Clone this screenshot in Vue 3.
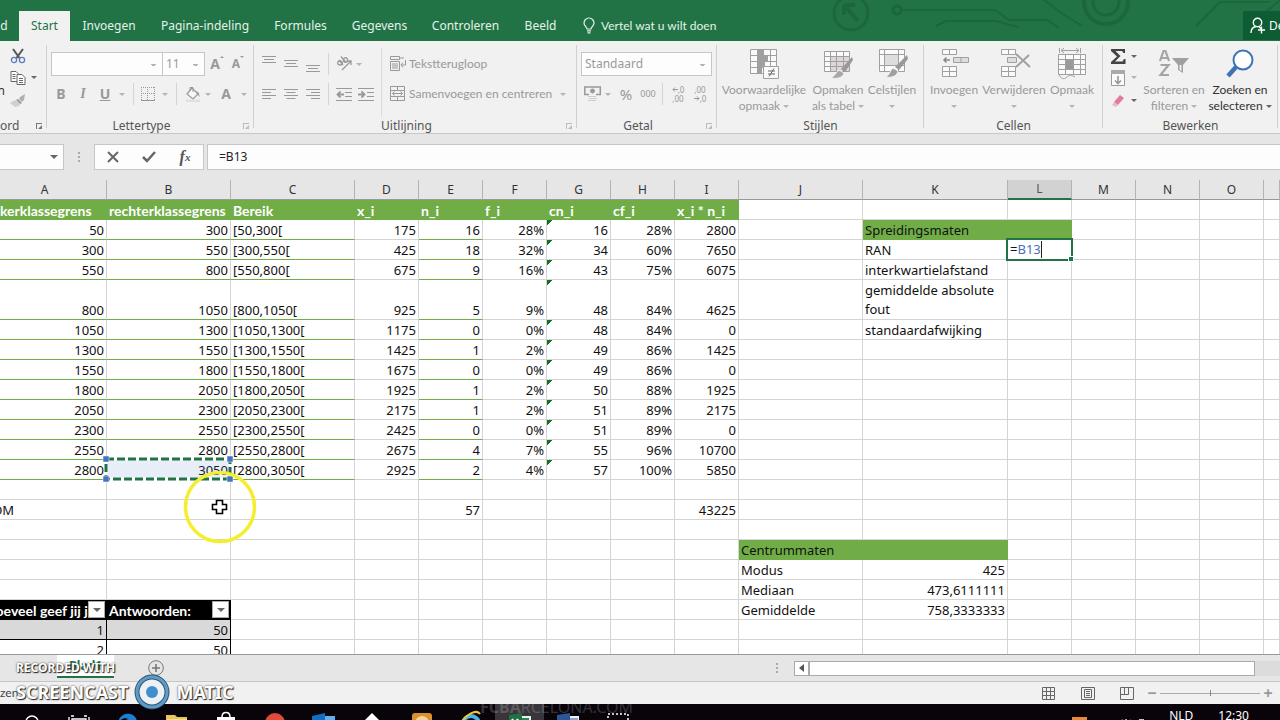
<script setup>
const columns = [
  { id: 'A', w: 124 }, { id: 'B', w: 124 }, { id: 'C', w: 124 }, { id: 'D', w: 64 },
  { id: 'E', w: 64 }, { id: 'F', w: 64 }, { id: 'G', w: 64 }, { id: 'H', w: 64 },
  { id: 'I', w: 64 }, { id: 'J', w: 124 }, { id: 'K', w: 145 }, { id: 'L', w: 64 },
  { id: 'M', w: 64 }, { id: 'N', w: 64 }, { id: 'O', w: 64 }, { id: '', w: null },
]

const heads = ['linkerklassegrens', 'rechterklassegrens', 'Bereik', 'x_i', 'n_i', 'f_i', 'cn_i', 'cf_i', 'x_i * n_i']

const classes = [
  ['50', '300', '[50,300[', '175', '16', '28%', '16', '28%', '2800'],
  ['300', '550', '[300,550[', '425', '18', '32%', '34', '60%', '7650'],
  ['550', '800', '[550,800[', '675', '9', '16%', '43', '75%', '6075'],
  ['800', '1050', '[800,1050[', '925', '5', '9%', '48', '84%', '4625'],
  ['1050', '1300', '[1050,1300[', '1175', '0', '0%', '48', '84%', '0'],
  ['1300', '1550', '[1300,1550[', '1425', '1', '2%', '49', '86%', '1425'],
  ['1550', '1800', '[1550,1800[', '1675', '0', '0%', '49', '86%', '0'],
  ['1800', '2050', '[1800,2050[', '1925', '1', '2%', '50', '88%', '1925'],
  ['2050', '2300', '[2050,2300[', '2175', '1', '2%', '51', '89%', '2175'],
  ['2300', '2550', '[2300,2550[', '2425', '0', '0%', '51', '89%', '0'],
  ['2550', '2800', '[2550,2800[', '2675', '4', '7%', '55', '96%', '10700'],
  ['2800', '3050', '[2800,3050[', '2925', '2', '4%', '57', '100%', '5850'],
]

const cells = {}
const put = (ref, text, cls = '') => { cells[ref] = { text, cls } }

heads.forEach((t, i) => put('ABCDEFGHI'[i] + 1, t, 'head'))
classes.forEach((row, r) => row.forEach((t, c) => {
  const col = 'ABCDEFGHI'[c]
  const cls = [col === 'C' ? '' : 'num']
  if ('ABCE'.includes(col)) cls.push('ruled')
  if (col === 'G') cls.push('flag')
  put(col + (r + 2), t, cls.join(' '))
}))
put('K2', 'Spreidingsmaten', 'green')
put('L2', '', 'green')
put('K3', 'RAN')
put('K4', 'interkwartielafstand')
put('K5', 'gemiddelde absolute fout', 'wrap')
put('K6', 'standaardafwijking')
put('A15', 'SOM')
put('E15', '57', 'num')
put('I15', '43225', 'num')
put('J17', 'Centrummaten', 'green')
put('K17', '', 'green')
put('J18', 'Modus')
put('K18', '425', 'num')
put('J19', 'Mediaan')
put('K19', '473,6111111', 'num')
put('J20', 'Gemiddelde')
put('K20', '758,3333333', 'num')
put('A20', 'Hoeveel geef jij j', 'black')
put('B20', 'Antwoorden:', 'black')
put('A21', '1', 'num band')
put('B21', '50', 'num band')
put('A22', '2', 'num plain')
put('B22', '50', 'num plain')

const tabs = [
  { t: 'Invoegen', w: 78 }, { t: 'Pagina-indeling', w: 114 }, { t: 'Formules', w: 77 },
  { t: 'Gegevens', w: 81 }, { t: 'Controleren', w: 91 }, { t: 'Beeld', w: 59 },
]
</script>

<template>
  <div class="app">
    <header class="titlebar">
      <svg class="circuit" width="450" height="41" viewBox="0 0 450 41" fill="none" stroke="#1b6139" stroke-width="3">
        <circle cx="21" cy="13" r="17" /><path d="M14 5l14 16M14 5v10M14 5h11" stroke-width="4" />
        <circle cx="67" cy="10" r="4" /><path d="M71 10h94l14 10h38l12 8M106 26l10-5h50l22 6" stroke-width="2" />
        <path d="M214 0l16 12 22 14" stroke-width="2" /><circle cx="276" cy="2" r="22" stroke-width="4" /><circle cx="276" cy="2" r="13" />
        <path d="M366 26l24-24h50M436 12l14-12" stroke-width="2" />
      </svg>
      <nav class="tabs">
        <button class="tab edge">d</button>
        <button class="tab active">Start</button>
        <button v-for="t in tabs" :key="t.t" class="tab" :style="{ width: t.w + 'px' }">{{ t.t }}</button>
        <button class="tell">
          <svg width="12" height="16" viewBox="0 0 12 16" fill="none" stroke="#e4f2e9" stroke-width="1.2"><path d="M4 11c0-2-3-3-3-6a5 5 0 0 1 10 0c0 3-3 4-3 6zM4 12.8h4M4.500 14.800h3" /></svg>
          <span>Vertel wat u wilt doen</span>
        </button>
        <button class="share">
          <svg width="16" height="17" viewBox="0 0 16 17" fill="none" stroke="#fff" stroke-width="1.400"><circle cx="7.500" cy="5.500" r="4.200" /><path d="M1 16c0-4 2-6 5-6.500M9 10l2 1.500M11.500 9.500v7M8 13h7" /></svg>
          <span>De</span>
        </button>
      </nav>
    </header>

    <section class="ribbon">
      <div class="group clip">
        <div class="body">
          <span class="cut">n</span>
          <div class="stack">
            <div class="line">
              <button class="ico w18" aria-label="Knippen"><svg width="16" height="16" viewBox="0 0 16 16" fill="none"><path d="M3 1l6.500 9M13 1L6.500 10" stroke="#555" stroke-width="2" /><circle cx="4" cy="12" r="2.600" stroke="#5b7fbd" stroke-width="1.300" /><circle cx="12" cy="12" r="2.600" stroke="#5b7fbd" stroke-width="1.300" /></svg></button>
            </div>
            <div class="line">
              <button class="ico w18" aria-label="Kopiëren"><svg width="16" height="14" viewBox="0 0 16 14" fill="#fff" stroke="#666"><path d="M1 .5h5l2 2v8H1z" /><path d="M7 3.500h5l3 3v7H7zM2.500 3.500h3M2.500 5.500h3M2.500 7.500h3M9 7.500h4M9 9.500h4M9 11.500h4" /></svg></button>
              <i class="arr dark"></i>
            </div>
            <div class="line">
              <button class="ico w18" aria-label="Opmaak kopiëren"><svg width="16" height="14" viewBox="0 0 16 14"><path d="M15 0l-5 3-1 2 3 3 2-2z" fill="#b0b0b0" /><path d="M8 5l4 4-2 1-4-4z" fill="#999" /><path d="M5 6L0 9l5 4 4-1 1-2z" fill="#cfcfcf" /></svg></button>
            </div>
          </div>
        </div>
        <footer><span class="cliplabel">ord</span><button class="launch on" aria-label="Klembord"></button></footer>
      </div>

      <div class="group font">
        <div class="body col">
          <div class="row">
            <select class="fontname" aria-label="Lettertype"><option></option></select>
            <select class="fontsize" aria-label="Tekengrootte"><option>11</option></select>
            <button class="ico w24 bigA" aria-label="Groter">A<i class="up"></i></button>
            <button class="ico w18 smallA" aria-label="Kleiner">A<i class="down"></i></button>
          </div>
          <div class="row">
            <button class="ico w20 b">B</button>
            <button class="ico w24 i">I</button>
            <button class="ico w20 u">U</button>
            <span class="ico w14"><i class="arr"></i></span>
            <span class="ico w8"><i class="bar"></i></span>
            <button class="ico w22" aria-label="Randen"><svg width="14" height="14" viewBox="0 0 14 14" fill="none" stroke="#999" stroke-dasharray="1 1"><path d="M0 .5h14M0 6.500h14M.5 0v13M6.500 0v13M13.500 0v13" /><path d="M0 13.500h14" stroke-dasharray="none" /></svg></button>
            <span class="ico w12"><i class="arr"></i></span>
            <span class="ico w10"><i class="bar"></i></span>
            <button class="ico w24" aria-label="Opvulkleur"><svg width="16" height="16" viewBox="0 0 16 16"><path d="M7 2l6 6-5 5-6-5z" fill="#f8f8f8" stroke="#999" stroke-width="1.200" /><path d="M5 5V1.500h3V6" fill="none" stroke="#999" /><path d="M11 5c3 1 3.500 3 3.500 6l-2-3z" fill="#999" /><path d="M1 13.500h14V16H1z" fill="#e0e0e0" /></svg></button>
            <span class="ico w6"><i class="arr"></i></span>
            <button class="ico w30 b">A</button>
            <span class="ico w6"><i class="arr"></i></span>
          </div>
        </div>
        <footer><span>Lettertype</span><button class="launch" aria-label="Lettertype-instellingen"></button></footer>
      </div>

      <div class="group align">
        <div class="body">
          <div class="col alignleft">
            <div class="row">
              <button class="ico w22" aria-label="Boven"><svg width="14" height="16" viewBox="0 0 14 16" stroke="#999"><path d="M0 .5h14M2 3.500h10M0 6.500h14" /></svg></button>
              <button class="ico w22" aria-label="Midden"><svg width="14" height="16" viewBox="0 0 14 16" stroke="#999"><path d="M0 4.500h14M2 7.500h10M0 10.500h14" /></svg></button>
              <button class="ico w22" aria-label="Onder"><svg width="14" height="16" viewBox="0 0 14 16" stroke="#999"><path d="M0 9.500h14M2 12.500h10M0 15.500h14" /></svg></button>
              <span class="ico w8"><i class="bar"></i></span>
              <button class="ico w24" aria-label="Afdrukstand"><svg width="17" height="16" viewBox="0 0 17 16" fill="none" stroke="#999" stroke-width="1.300"><path d="M6 14L15 5M11 5h4v4" /><ellipse cx="4" cy="7" rx="2.300" ry="2" /><path d="M3 4l4 5M5 .5l5 6" /><ellipse cx="9.500" cy="4" rx="2" ry="2.300" /></svg></button>
              <span class="ico w6"><i class="arr"></i></span>
            </div>
            <div class="row">
              <button class="ico w22" aria-label="Links"><svg width="14" height="11" viewBox="0 0 14 11" stroke="#999"><path d="M0 .5h14M0 3.500h9M0 6.500h14M0 9.500h9" /></svg></button>
              <button class="ico w22" aria-label="Centreren"><svg width="14" height="11" viewBox="0 0 14 11" stroke="#999"><path d="M0 .5h14M2.500 3.500h9M0 6.500h14M2.500 9.500h9" /></svg></button>
              <button class="ico w22" aria-label="Rechts"><svg width="14" height="11" viewBox="0 0 14 11" stroke="#999"><path d="M0 .5h14M5 3.500h9M0 6.500h14M5 9.500h9" /></svg></button>
              <span class="ico w8"><i class="bar"></i></span>
              <button class="ico w24" aria-label="Inspringing verkleinen"><svg width="16" height="13" viewBox="0 0 16 13" fill="none" stroke="#999"><path d="M0 .5h16M9 4.500h7M9 8.500h7M0 12.500h16" /><path d="M8 6.500H2M4.500 3.500l-3 3 3 3" stroke-width="1.800" /></svg></button>
              <button class="ico w20" aria-label="Inspringing vergroten"><svg width="16" height="13" viewBox="0 0 16 13" fill="none" stroke="#999"><path d="M0 .5h16M9 4.500h7M9 8.500h7M0 12.500h16" /><path d="M0 6.500h6M3.500 3.500l3 3-3 3" stroke-width="1.800" /></svg></button>
            </div>
          </div>
          <div class="col alignright">
            <div class="row">
              <button class="wide">
                <svg width="16" height="16" viewBox="0 0 16 16" fill="none" stroke="#999"><path d="M.5.500h9v3h-9zM10 2h4M.5 5.500h9v9h-9zM2 8h6M2 10h6M2 12h6M15.500 4v5h-4M13 6.500L11 9l2 2.500" /></svg>
                <span>Tekstterugloop</span>
              </button>
            </div>
            <div class="row">
              <button class="wide">
                <svg width="16" height="16" viewBox="0 0 16 16" fill="none" stroke="#999"><path d="M.5.500h14v14H.5zM0 4.500h15M0 10.500h15M7.500 0v4.500M7.500 10.500V15M2.500 7.500h10M4.500 5.500l-2 2 2 2M10.500 5.500l2 2-2 2" /></svg>
                <span>Samenvoegen en centreren</span>
              </button>
              <i class="arr"></i>
            </div>
          </div>
        </div>
        <footer><span>Uitlijning</span><button class="launch" aria-label="Uitlijningsinstellingen"></button></footer>
      </div>

      <div class="group number">
        <div class="body col">
          <div class="row"><select class="format" aria-label="Getalnotatie"><option>Standaard</option></select></div>
          <div class="row">
            <button class="ico w22" aria-label="Valuta"><svg width="17" height="16" viewBox="0 0 17 16" fill="none" stroke="#999"><path d="M5 8.500H.8v-7.500h15.500v7.500H12" stroke-width="1.500" /><circle cx="8.500" cy="5" r="2" fill="#999" /><path d="M4 10.500h8M5 12.500h8M4 14.500h8" stroke="#ccc" /></svg></button>
            <span class="ico w10"><i class="arr"></i></span>
            <button class="ico w26 pct">%</button>
            <button class="ico w18 mil">000</button>
            <span class="ico w10"><i class="bar"></i></span>
            <button class="ico w22 dec">
              <span><svg width="6" height="5" viewBox="0 0 6 5" fill="none" stroke="#999"><path d="M6 2.500H1M3 .5l-2 2 2 2" /></svg>,0</span><span>,00</span>
            </button>
            <button class="ico w22 dec">
              <span>,00</span><span><svg width="6" height="5" viewBox="0 0 6 5" fill="none" stroke="#999"><path d="M0 2.500h5M3 .5l2 2-2 2" /></svg>,0</span>
            </button>
          </div>
        </div>
        <footer><span>Getal</span><button class="launch" aria-label="Getalinstellingen"></button></footer>
      </div>

      <div class="group styles">
        <div class="body">
          <button class="big w94">
            <svg width="32" height="32" viewBox="0 0 32 32" fill="#fafafa" stroke="#a0a0a0"><path d="M2.500.5h26v24h-26z" /><path d="M2 6.500h27M2 12.500h27M2 18.500h27M9.500 0v25M15.500 0v25M22.500 0v25" /><path d="M10 1h5v5h-5zM10 7h10v5H10zM10 13h7v5h-7zM10 19h4v5h-4z" fill="#a0a0a0" stroke="none" /><path d="M15.500 17.500h15v12h-15z" /><path d="M20 22h7M20 25h7M26 19.500l-5 8" stroke="#666" /></svg>
            <span>Voorwaardelijke</span><span>opmaak<i class="arr"></i></span>
          </button>
          <button class="big w54">
            <svg width="32" height="32" viewBox="0 0 32 32" fill="#fafafa" stroke="#a0a0a0"><path d="M2.500 2.500h25v20h-25z" /><path d="M8 8h19v14H8z" fill="#ddd6d6" stroke="none" /><path d="M2 7.500h26M2 12.500h26M2 17.500h26M8.500 2v21M14.500 2v21M21.500 2v21" /><path d="M30 8L19 20l4 3 8-12z" fill="#999" stroke="none" /><path d="M17 21l5 3c-1 5-7 6-13 5 4-2 5-6 8-8z" fill="#a8a8a8" stroke="#f1f1f1" /></svg>
            <span>Opmaken</span><span>als tabel<i class="arr"></i></span>
          </button>
          <button class="big w54">
            <svg width="32" height="32" viewBox="0 0 32 32" fill="#fafafa" stroke="#a0a0a0"><path d="M3.500.5h25v22h-25z" /><path d="M3 5.500h26M3 16.500h26M8.500 0v23M22.500 0v23" /><path d="M9 6h13v10H9z" fill="#ddd" stroke="none" /><path d="M31 6L19 18l4 3 9-11z" fill="#999" stroke="none" /><path d="M17 19l5 3c-1 5-6 7-12 6 4-2 4-7 7-9z" fill="#a0a0a0" stroke="#f1f1f1" /></svg>
            <span>Celstijlen</span><span><i class="arr lone"></i></span>
          </button>
        </div>
        <footer class="nolaunch"><span>Stijlen</span></footer>
      </div>

      <div class="group cellsgrp">
        <div class="body">
          <button class="big w60">
            <svg width="32" height="32" viewBox="0 0 32 32" fill="#fafafa" stroke="#a0a0a0"><path d="M4.500.5h14v5h-14zM11.500 0v6M4.500 17.500h14v10h-14zM4 22.500h15M11.500 17v11" /><path d="M15.500 8.500h15v5h-15z" fill="#ddd" /><path d="M23 8v6" /><path d="M12 11H6M8.500 8.500L6 11l2.500 2.500" fill="none" stroke="#888" stroke-width="1.500" /></svg>
            <span>Invoegen</span><span><i class="arr lone"></i></span>
          </button>
          <button class="big w60">
            <svg width="32" height="32" viewBox="0 0 32 32" fill="#fafafa" stroke="#a0a0a0"><path d="M3.500.5h14v5h-14zM10.500 0v6M3.500 17.500h14v10h-14zM3 22.500h15M10.500 17v11" /><path d="M9.500 8.500h9v5h-9z" fill="#ddd" /><path d="M18 5l14 13M31 6L18 18" fill="none" stroke-width="2" /></svg>
            <span>Verwijderen</span><span><i class="arr lone"></i></span>
          </button>
          <button class="big w56">
            <svg width="32" height="32" viewBox="0 0 32 32" fill="#fafafa" stroke="#a0a0a0"><path d="M2.500 5.500h27v20h-27z" /><path d="M2 10.500h28M2 15.500h28M2 20.500h28M9.500 5v21M17.500 5v21M24.500 5v21" /><path d="M10 11h7v9h-7z" fill="#999" stroke="none" /><path d="M3.500-1v5M24.500-1v5M5 1.500h18M8-1L5 1.500 8 4M20-1l3 2.500L20 4M3 26c3 5 6 4 8 2s5-2 8 0" fill="none" /></svg>
            <span>Opmaak</span><span><i class="arr lone"></i></span>
          </button>
        </div>
        <footer class="nolaunch"><span>Cellen</span></footer>
      </div>

      <div class="group edit">
        <div class="body">
          <div class="stack right">
            <div class="line"><button class="ico w24" aria-label="AutoSom"><svg width="15" height="15" viewBox="0 0 15 15"><path d="M0 0h14v4h-1.500L11 2H4.500l5 5-5.500 5.500h7.500L13 10h1.500v5H0v-2l6-5.500L0 2z" fill="#444" /></svg></button><i class="arr dark"></i></div>
            <div class="line"><button class="ico w24" aria-label="Doorvoeren"><svg width="14" height="16" viewBox="0 0 14 16" fill="none" stroke="#999"><path d="M.5.500h13v15H.5z" fill="#fafafa" /><path d="M0 0h14v4H0z" fill="#aaa" stroke="none" /><path d="M7 6v7M4 10.500l3 3 3-3" stroke-width="1.600" /></svg></button><i class="arr"></i></div>
            <div class="line"><button class="ico w24" aria-label="Wissen"><svg width="14" height="14" viewBox="0 0 14 14"><path d="M9 1l4 3-6 7-4-3z" fill="#e27a9b" /><path d="M3 8l4 3-2 2-4-2z" fill="#efb6c8" /></svg></button><i class="arr dark"></i></div>
          </div>
          <button class="big w68">
            <svg width="32" height="32" viewBox="0 0 32 32"><path d="M2 12L5.500 2h2L11 12M3.500 9h6M2.500 16h8L2.500 26h8.500" fill="none" stroke="#a5a5a5" stroke-width="2.200" /><path d="M14 9h17l-6 7v8l-5-3v-5z" fill="#a0a0a0" /><path d="M21.500 16h2v6l-2-1z" fill="#eee" /></svg>
            <span>Sorteren en</span><span>filteren<i class="arr"></i></span>
          </button>
          <button class="big w64 strong">
            <svg width="32" height="32" viewBox="0 0 32 32"><path d="M12 18L4 27" stroke="#3f73b5" stroke-width="4.500" /><circle cx="19" cy="11" r="9.500" fill="#fff" stroke="#3f73b5" stroke-width="2" /></svg>
            <span>Zoeken en</span><span>selecteren<i class="arr dark"></i></span>
          </button>
        </div>
        <footer class="nolaunch"><span>Bewerken</span></footer>
      </div>
    </section>

    <section class="formulabar">
      <button class="namebox" aria-label="Naamvak"><i class="arr dark large"></i></button>
      <span class="dots"></span>
      <div class="fxbox">
        <button aria-label="Annuleren"><svg width="12" height="12" viewBox="0 0 12 12"><path d="M1 1l10 10M11 1L1 11" stroke="#666" stroke-width="2" /></svg></button>
        <button aria-label="Invoeren"><svg width="14" height="12" viewBox="0 0 14 12"><path d="M1 6l4 4 8-9" fill="none" stroke="#666" stroke-width="2.500" /></svg></button>
        <button class="fx" aria-label="Functie invoegen">f<sub>x</sub></button>
      </div>
      <input class="formula" aria-label="Formulebalk" value="=B13" />
    </section>

    <main class="sheet">
      <table>
        <colgroup>
          <col v-for="c in columns" :key="c.id" :style="c.w ? { width: c.w + 'px' } : {}" />
        </colgroup>
        <thead>
          <tr><th v-for="c in columns" :key="c.id" :class="{ sel: c.id === 'L' }">{{ c.id }}</th></tr>
        </thead>
        <tbody>
          <tr v-for="r in 23" :key="r" :class="{ tall: r === 5 }">
            <td v-for="c in columns" :key="c.id" :class="cells[c.id + r]?.cls">
              <template v-if="c.id === 'L' && r === 3">
                <div class="editor" role="textbox" aria-label="L3">=<span>B13</span><b></b></div>
              </template>
              <template v-else-if="c.id === 'B' && r === 13">
                {{ cells.B13.text }}
                <svg class="march" width="128" height="24" viewBox="0 0 128 24" fill="none">
                  <rect x="2" y="2" width="124" height="20" fill="#4472c4" fill-opacity=".12" />
                  <rect x="2" y="2" width="124" height="20" stroke="#fff" stroke-width="3" />
                  <rect x="2" y="2" width="124" height="20" stroke="#217346" stroke-width="3" stroke-dasharray="8 3" />
                  <path d="M-1-1h6v6h-6zM123-1h6v6h-6zM-1 19h6v6h-6zM123 19h6v6h-6z" fill="#4472c4" stroke="#fff" stroke-width=".5" />
                </svg>
              </template>
              <template v-else>{{ cells[c.id + r]?.text }}</template>
              <button v-if="r === 20 && (c.id === 'A' || c.id === 'B')" class="filter" aria-label="Filter"><i class="arr dark large"></i></button>
            </td>
          </tr>
        </tbody>
      </table>
      <svg class="pointer" width="74" height="74" viewBox="0 0 74 74">
        <circle cx="37" cy="37" r="34.500" fill="none" stroke="#f5ee2e" stroke-width="3.500" />
        <path d="M33.500 30.500h6v4h4v5h-4v4h-6v-4h-4v-5h4z" fill="#fff" stroke="#000" stroke-width="1.600" />
      </svg>
    </main>

    <section class="sheetbar">
      <button class="sheettab">Blad1</button>
      <button class="add" aria-label="Nieuw blad"><svg width="16" height="16" viewBox="0 0 16 16" fill="none" stroke="#777"><circle cx="8" cy="8" r="7.300" /><path d="M8 4v8M4 8h8" stroke-width="1.600" /></svg></button>
      <span class="dots"></span>
      <div class="scroll"><button aria-label="Naar links"><i></i></button><span></span></div>
    </section>

    <section class="status">
      <span class="mode">zen</span>
      <button aria-label="Normaal"><svg width="14" height="13" viewBox="0 0 14 13" fill="none" stroke="#666"><path d="M.5.500h12v12H.5zM0 4.500h13M0 8.500h13M4.500 0v13M8.500 0v13" /></svg></button>
      <button aria-label="Pagina-indeling"><svg width="14" height="13" viewBox="0 0 14 13" fill="none" stroke="#666"><path d="M.5.500h13v12H.5zM3.500 2.500h7v8h-7zM5 4.500h4M5 6.500h4M5 8.500h4" /></svg></button>
      <button aria-label="Pagina-eindevoorbeeld"><svg width="14" height="13" viewBox="0 0 14 13" fill="none" stroke="#666"><path d="M.5.500h13v12H.5zM4.500 0v7.500M0 7.500h8.500V0" /></svg></button>
      <span class="sign">−</span>
      <input class="zoom" type="range" min="0" max="100" value="50" aria-label="Zoom" />
      <span class="sign">+</span>
    </section>

    <footer class="taskbar">
      <span class="wall"><b>FCBA</b>RCELONA.COM</span>
      <button aria-label="Zoeken"><svg width="24" height="24" viewBox="0 0 24 24" fill="none" stroke="#fff" stroke-width="1.500"><circle cx="14" cy="12" r="6" /></svg></button>
      <button aria-label="Taakweergave"><svg width="24" height="24" viewBox="0 0 24 24" fill="none" stroke="#fff" stroke-width="1.300"><path d="M5 9h14v10H5zM2 7v14M22 7v14M4 6h3M17 6h3" /></svg></button>
      <button aria-label="Edge"><svg width="24" height="24" viewBox="0 0 24 24"><path d="M2 13C4 0 22 1 21 14H9c1-4 1-5 4-5-5-2-8 0-11 4z" fill="#1b7fd6" /></svg></button>
      <button aria-label="Verkenner"><svg width="24" height="24" viewBox="0 0 24 24"><path d="M1 5h9l2 2h10v14H1z" fill="#e6c55d" /><path d="M2 9h20v12H2z" fill="#f6dd8c" /></svg></button>
      <button aria-label="Store"><svg width="24" height="24" viewBox="0 0 24 24"><path d="M3 7h18v14H3z" fill="#fff" /><path d="M8 7c0-6 8-6 8 0" fill="none" stroke="#fff" stroke-width="1.500" /><path d="M8 10h3v3H8z" fill="#d33" /></svg></button>
      <button aria-label="Chrome"><svg width="24" height="24" viewBox="0 0 24 24"><circle cx="12" cy="13" r="10" fill="#e04a3b" /><circle cx="12" cy="15" r="5" fill="#f5c1a8" /></svg></button>
      <button aria-label="Outlook"><svg width="24" height="24" viewBox="0 0 24 24"><path d="M8 6h15v14H8z" fill="#5db2ee" /><path d="M0 6l13-3v20L0 20z" fill="#0f6fc1" /></svg></button>
      <button aria-label="Inkscape"><svg width="24" height="24" viewBox="0 0 24 24"><path d="M11 3l9 9-9 9-9-9z" fill="#fff" /></svg></button>
      <button aria-label="Oranje app"><svg width="24" height="24" viewBox="0 0 24 24"><rect x="2" y="3" width="20" height="20" rx="3" fill="#d6922c" /><circle cx="12" cy="13" r="7" fill="#f4d49a" /></svg></button>
      <button aria-label="Internet Explorer"><svg width="24" height="24" viewBox="0 0 24 24" fill="none"><circle cx="12" cy="14" r="8" stroke="#4ab4ea" stroke-width="4" /><path d="M2 14C6 4 18-1 21 4" stroke="#f3c63a" stroke-width="2" /></svg></button>
      <button class="on" aria-label="Excel"><svg width="24" height="24" viewBox="0 0 24 24"><path d="M11 6h12v14H11z" fill="#e6f2ea" /><path d="M13 8h8v3h-8z" fill="#2b8652" /><path d="M1 5l13-2v20L1 20z" fill="#1f7244" /><path d="M4 9l6 8M10 9l-6 8" stroke="#fff" stroke-width="2" /></svg></button>
      <button aria-label="Word"><svg width="24" height="24" viewBox="0 0 24 24"><path d="M11 6h11v14H11z" fill="#eef3fb" /><path d="M13 9h8M13 12h8" stroke="#2b579a" /><path d="M0 5l13-2v20L0 20z" fill="#2b579a" /></svg></button>
      <button aria-label="Opname"><svg width="24" height="24" viewBox="0 0 24 24"><path d="M2 4h20v20H2z" fill="none" stroke="#fff" stroke-width="1.500" stroke-dasharray="2 2" /></svg></button>
      <div class="tray">
        <svg width="70" height="24" viewBox="0 0 70 24" fill="none" stroke="#fff" stroke-width="1.300"><path d="M1 5h15v14H1z" fill="#e8893a" stroke="none" /><path d="M36 9h5l1 3M36 9v8M47 10l5-2M55 7v10M59 8c3 3 3 6 0 9M68 8h5" /></svg>
        <span class="lang">NLD</span>
        <time>12:30</time>
      </div>
    </footer>

    <div class="recorder">
      <span class="rec">RECORDED WITH</span>
      <div class="brand">
        <span>SCREENCAST</span>
        <svg width="36" height="36" viewBox="0 0 36 36"><circle cx="18" cy="18" r="15" fill="#eef1f4" stroke="#33536e" stroke-width="5" /><circle cx="18" cy="18" r="15" fill="none" stroke="#5b9ccb" stroke-width="3" /><circle cx="18" cy="18" r="6" fill="#3f8fce" /></svg>
        <span>MATIC</span>
      </div>
    </div>
  </div>
</template>

<style>
html, body { margin: 0; overflow: hidden; }
</style>

<style scoped>
.app { position: relative; display: flex; flex-direction: column; height: 100vh; overflow: hidden; background: #e6e6e6; font: 12px/16px "Noto Sans", "Open Sans", sans-serif; color: #444; }
button { border: 0; margin: 0; padding: 0; background: none; font: inherit; color: inherit; white-space: nowrap; flex: none; }
select, input { font: inherit; margin: 0; box-sizing: border-box; border-radius: 0; appearance: none; outline: 0; }
svg { flex: none; overflow: visible; }

.titlebar { position: relative; background: #217346; padding-top: 11px; flex: none; }
.circuit { position: absolute; right: 0; top: 0; overflow: hidden; opacity: .7; }
.tabs { position: relative; display: flex; height: 30px; color: #e4f2e9; }
.tab { text-align: center; }
.edge { width: 19px; padding-right: 11px; }
.active { width: 51px; background: #f1f1f1; color: #217346; }
.tell { display: flex; align-items: center; gap: 6px; margin-left: 13px; }
.tell span { font-family: Lato, sans-serif; font-size: 12px; }
.share { display: flex; align-items: center; gap: 3px; width: 37px; height: 29px; margin-left: auto; padding-left: 7px; box-sizing: border-box; background: #0e5c33; color: #fff; overflow: hidden; }

.ribbon { display: flex; flex: none; height: 92px; background: #f1f1f1; border-bottom: 1px solid #c8c8c8; color: #999; overflow: hidden; }
.group { position: relative; display: flex; flex-direction: column; flex: none; box-sizing: border-box; padding-top: 7px; }
.group::after { content: ""; position: absolute; right: 0; top: 4px; bottom: 5px; width: 1px; background: #d0d0d0; }
.clip { width: 47px; }
.font { width: 207px; }
.align { width: 323px; }
.number { width: 140px; }
.styles { width: 207px; }
.cellsgrp { width: 179px; }
.edit { width: 175px; }
.body { display: flex; flex: none; height: 69px; }
.col { display: flex; flex-direction: column; }
.group > .col, .alignleft { padding-left: 4px; }
.group > .col, .alignleft, .alignright { padding-top: 4px; box-sizing: border-box; gap: 6px; }
.row { display: flex; align-items: center; height: 24px; }
.alignleft { width: 127px; }
.alignright { padding-left: 8px; border-left: 1px solid #dcdcdc; }
.wide { display: flex; align-items: center; gap: 3px; font-family: Lato, sans-serif; font-size: 12px; }
.alignright .arr { margin-left: 8px; }
.group footer { display: flex; flex: none; align-items: center; justify-content: center; height: 18px; color: #555; padding-right: 18px; }
.group footer.nolaunch { padding-right: 0; }
.group footer .cliplabel { margin-right: auto; }
.launch { position: absolute; right: 5px; bottom: 4px; width: 6px; height: 6px; border-left: 1px solid #bbb; border-top: 1px solid #bbb; }
.launch::after { content: ""; position: absolute; right: 0; bottom: 0; border: 2px solid #bbb; border-left-color: transparent; border-top-color: transparent; }
.launch.on { border-color: #777; }
.launch.on::after { border-right-color: #777; border-bottom-color: #777; }

.ico { display: inline-flex; align-items: center; justify-content: center; flex: none; }
.w6 { width: 6px; } .w8 { width: 8px; } .w10 { width: 10px; } .w12 { width: 12px; } .w14 { width: 14px; }
.w18 { width: 18px; } .w20 { width: 20px; } .w22 { width: 22px; } .w24 { width: 24px; } .w26 { width: 26px; } .w30 { width: 30px; }
.w54 { width: 54px; } .w56 { width: 56px; } .w60 { width: 60px; } .w64 { width: 64px; } .w68 { width: 68px; } .w94 { width: 94px; }
.bar { width: 1px; height: 22px; background: #d4d4d4; }
.arr { display: inline-block; flex: none; width: 0; height: 0; border: 3px solid transparent; border-top-color: #b4b4b4; border-bottom: 0; }
.arr.dark { border-top-color: #666; }
.arr.large { border-width: 4px 4px 0; }
.b { font-weight: 700; font-size: 14px; }
.i { font: italic 700 14px "Liberation Serif", serif; }
.u { font-weight: 700; font-size: 14px; text-decoration: underline; }
.bigA, .smallA { font-weight: 700; align-items: flex-end; }
.bigA { font-size: 14px; }
.up, .down { align-self: flex-start; border: 2px solid transparent; }
.up { border-bottom-color: #999; border-top: 0; }
.down { border-top-color: #999; border-bottom: 0; }
select { height: 24px; border: 1px solid #c6c6c6; background: linear-gradient(#b4b4b4, #b4b4b4) right 6px center / 5px 1px no-repeat, linear-gradient(#b4b4b4, #b4b4b4) right 7px top 12px / 3px 1px no-repeat, #fdfdfd; color: #999; padding: 0 3px; }
.fontname { width: 112px; }
.fontsize { width: 43px; margin-left: -1px; }
.format { width: 131px; }
.pct { font-size: 15px; }
.mil { font-size: 9px; }
.dec { flex-direction: column; align-items: center; font-size: 8px; line-height: 9px; }
.dec span { display: flex; align-items: center; height: 9px; }
.big { display: flex; flex-direction: column; align-items: center; font-family: Lato, sans-serif; font-size: 12px; }
.big svg { margin: 1px 0 1px; }
.big span { display: flex; align-items: center; gap: 3px; height: 16px; }
.strong { color: #333; }
.stack { display: flex; flex-direction: column; padding-left: 4px; box-sizing: border-box; }
.stack.right { padding-left: 3px; width: 37px; }
.line { display: flex; align-items: center; gap: 4px; height: 23px; }
.right .line { gap: 1px; }
.line:first-child { height: 16px; margin-bottom: 2px; }
.cut { display: flex; justify-content: flex-end; width: 5px; align-self: center; color: #333; margin-top: 16px; overflow: hidden; }

.formulabar { display: flex; flex: none; height: 26px; margin: 10px 0; align-items: stretch; }
.namebox { width: 64px; box-sizing: border-box; border: 1px solid #c6c6c6; border-left: 0; background: #fdfdfd; display: flex; align-items: center; justify-content: flex-end; padding-right: 5px; }
.dots { width: 2px; height: 11px; align-self: center; background: repeating-linear-gradient(#aaa 0 2px, transparent 2px 4px); margin: 0 14px; }
.fxbox { display: flex; width: 110px; box-sizing: border-box; border: 1px solid #c6c6c6; background: #fdfdfd; }
.fxbox button { flex: 1; display: flex; align-items: center; justify-content: center; }
.fx { font: italic 700 16px "Liberation Serif", serif; color: #555; }
.fx sub { font-size: 11px; }
.formula { flex: 1; min-width: 0; margin-left: 3px; border: 1px solid #c6c6c6; border-right: 0; background: #fdfdfd; padding: 0 11px; font-size: 12px; color: #222; }

.sheet { position: relative; flex: 1; min-height: 0; overflow: hidden; }
table { width: calc(100% + 17px); margin-left: -17px; table-layout: fixed; border-collapse: separate; border-spacing: 0; background: #fff; }
th { height: 20px; padding: 0; box-sizing: border-box; background: #e6e6e6; border-right: 1px solid #b4b4b4; border-bottom: 1px solid #999; font-weight: 400; line-height: 18px; color: #333; }
th.sel { background: #d2d2d2; border-bottom: 2px solid #217346; color: #555; }
td { position: relative; height: 20px; padding: 0 2px; box-sizing: border-box; border-right: 1px solid #d4d4d4; border-bottom: 1px solid #d4d4d4; font-size: 13px; line-height: 17px; color: #111; white-space: nowrap; vertical-align: bottom; }
.tall td { height: 40px; }
.num { text-align: right; }
td.ruled { border-bottom-color: #70ad47; }
.flag { background: linear-gradient(135deg, #12731c 4px, transparent 4px); }
.head { background: #70ad47; border-color: #70ad47; color: #fff; font-family: Lato, sans-serif; font-size: 14px; font-weight: 700; }
.green { background: #70ad47; border-color: #70ad47; }
.wrap { white-space: normal; line-height: 19px; }
.black { background: #000; color: #fff; font-family: Lato, sans-serif; font-size: 14px; font-weight: 700; border-color: #000; }
.band { background: #d9d9d9; border-color: #000; }
.plain { border-color: #000; }
.filter { position: absolute; right: 1px; top: 1px; width: 17px; height: 17px; box-sizing: border-box; border: 1px solid #aaa; background: #fdfdfd; display: flex; align-items: center; justify-content: center; }
.editor { position: absolute; z-index: 1; left: -2px; top: -2px; right: -2px; bottom: -2px; border: 2px solid #217346; background: #fff; padding-left: 2px; display: flex; align-items: center; }
.editor span { color: #4a6fbe; }
.editor b { width: 1px; height: 17px; background: #222; }
.editor::after { content: ""; position: absolute; right: -3px; bottom: -3px; width: 4px; height: 4px; background: #217346; border: 1px solid #fff; }
.march { position: absolute; left: -3px; top: -3px; z-index: 1; }
.pointer { position: absolute; left: 183px; top: 290px; z-index: 2; }

.sheetbar { display: flex; flex: none; height: 28px; box-sizing: border-box; border-top: 1px solid #999; border-bottom: 1px solid #c6c6c6; align-items: center; }
.sheettab { align-self: flex-start; width: 57px; height: 23px; margin-left: 57px; background: #fff; border-bottom: 2px solid #217346; color: #217346; font-weight: 700; }
.add { margin-left: 34px; height: 16px; }
.sheetbar .dots { margin: 0 16px 0 auto; }
.scroll { display: flex; width: 38%; height: 15px; background: #dcdcdc; }
.scroll button { width: 15px; box-sizing: border-box; border: 1px solid #aaa; background: #fff; display: flex; align-items: center; justify-content: center; }
.scroll i { border: 4px solid transparent; border-right: 5px solid #555; border-left: 0; }
.scroll span { flex: 1; margin-right: 25px; border: 1px solid #aaa; background: #fff; }

.status { display: flex; flex: none; height: 22px; background: #f1f1f1; align-items: center; padding-right: 7px; }
.mode { margin-right: auto; font-family: Lato, sans-serif; }
.status button { margin-right: 25px; height: 13px; display: flex; }
.status button:nth-of-type(3) { margin-right: 13px; }
.sign { width: 10px; text-align: center; font-size: 16px; font-weight: 700; color: #999; }
.zoom { width: 100px; height: 12px; margin: 0 3px; background: linear-gradient(#aaa, #aaa) center / 100% 1px no-repeat; }
.zoom::-webkit-slider-thumb { appearance: none; width: 1px; height: 6px; background: #888; }

.taskbar { position: relative; display: flex; flex: none; height: 16px; background: #08040a; overflow: hidden; padding-left: 5px; align-items: flex-start; }
.taskbar button { width: 49px; height: 40px; display: flex; justify-content: center; padding-top: 6px; position: relative; }
.taskbar button.on { background: rgba(255, 255, 255, .2); }
.wall { position: absolute; left: 480px; top: -5px; font-size: 16px; color: #353038; }
.tray { display: flex; margin-left: auto; color: #fff; padding-right: 31px; }
.tray svg { margin-top: 8px; }
.lang { margin: 4px 25px 0 28px; }
.tray time { margin-top: 4px; }

.recorder { position: absolute; left: 16px; bottom: 10px; z-index: 3; color: #fff; font-weight: 700; text-shadow: 1px 1px 1px #222, 0 0 2px #333; }
.rec { display: block; font-size: 12px; line-height: 12px; }
.brand { display: flex; align-items: center; gap: 6px; height: 36px; font-size: 18px; }
</style>
